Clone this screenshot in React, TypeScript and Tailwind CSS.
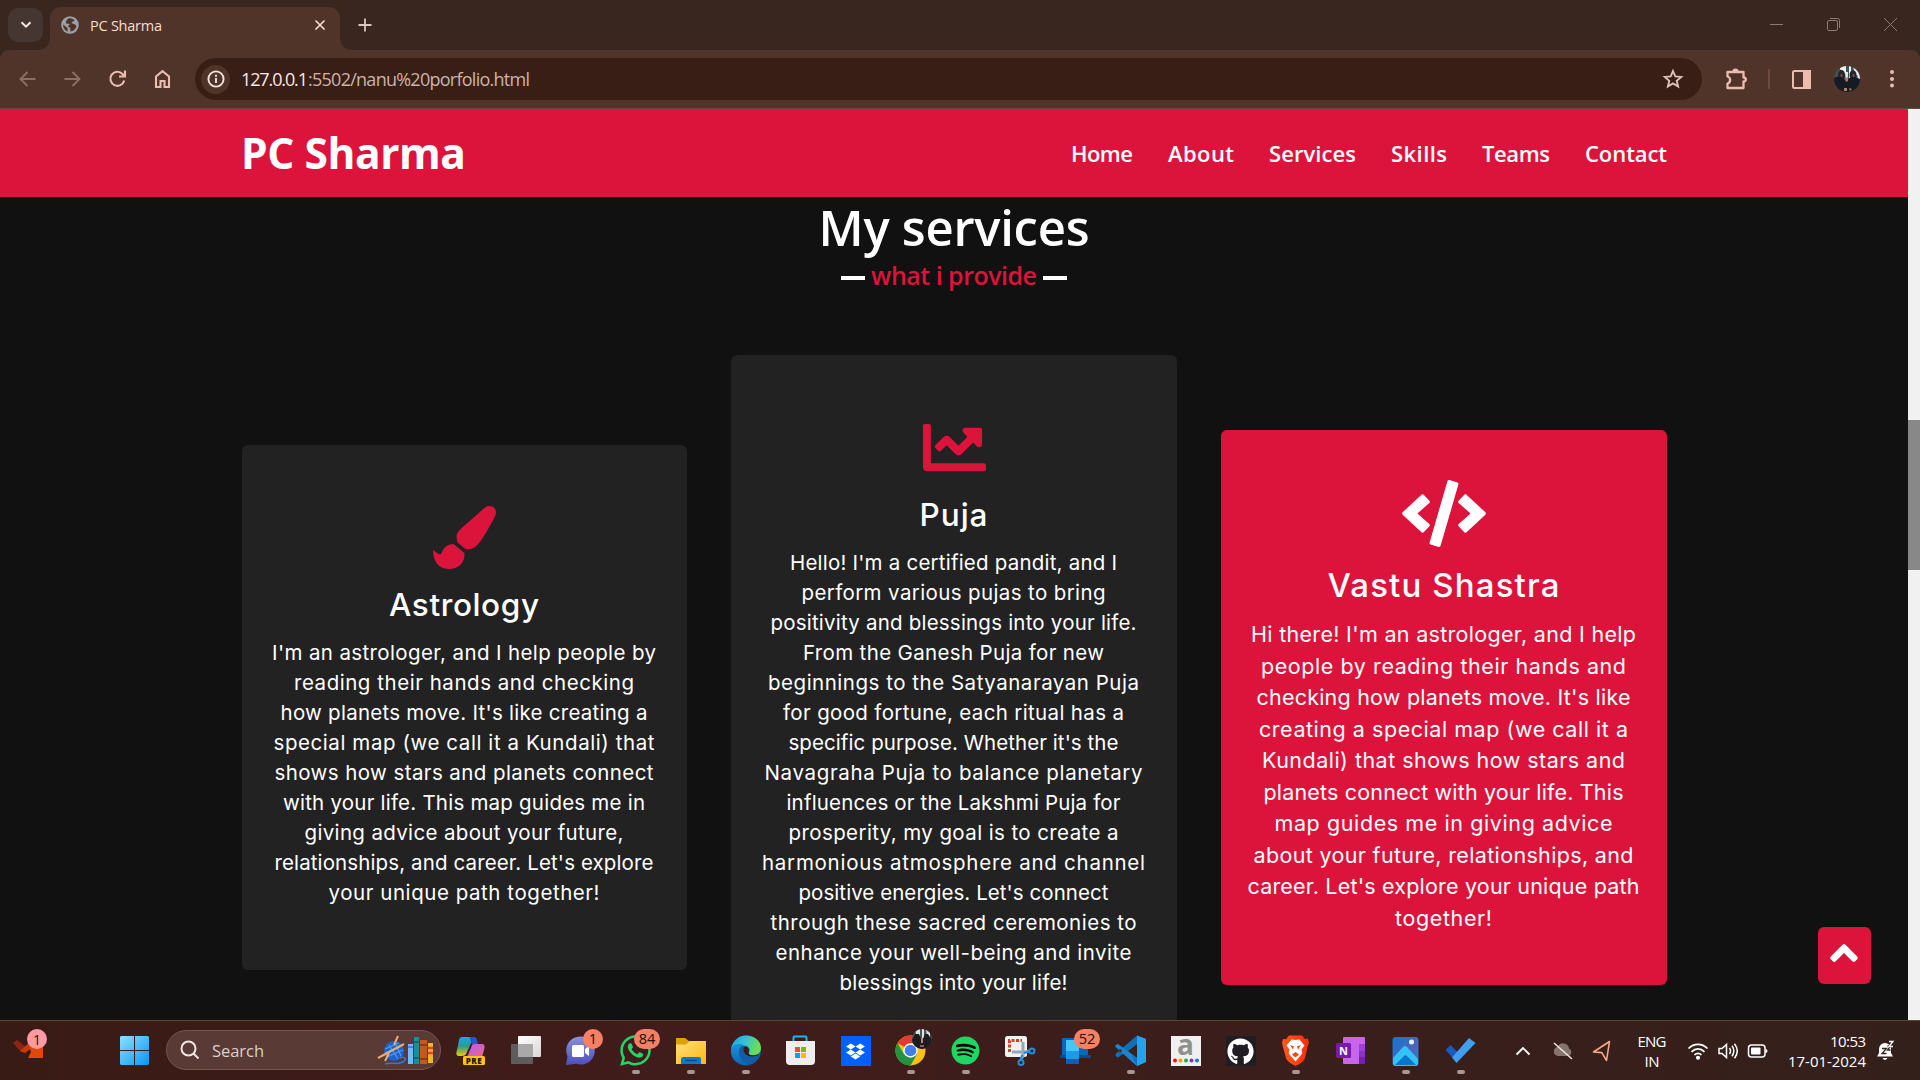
import { useLayoutEffect, useRef, type ReactNode } from "react";
import { FaPaintBrush, FaChartLine, FaCode, FaAngleUp, FaWhatsapp, FaSpotify, FaDropbox, FaGithub } from "react-icons/fa";

/** Single line of text tracked so that it spans exactly `w` pixels. */
function Fit({ w, className = "", children }: { w: number; className?: string; children: string }) {
  const ref = useRef<HTMLSpanElement>(null);
  useLayoutEffect(() => {
    const el = ref.current;
    if (!el) return;
    el.style.letterSpacing = "0px";
    const gap = (w - el.getBoundingClientRect().width) / Math.max(1, children.length - 1);
    el.style.letterSpacing = `${gap}px`;
    el.style.marginRight = `${-gap}px`;
  }, [w, children]);
  return (
    <span ref={ref} className={`inline-block whitespace-nowrap ${className}`}>
      {children}
    </span>
  );
}

type Line = [string, number];

const astrology: Line[] = [
  ["I'm an astrologer, and I help people by", 384],
  ["reading their hands and checking", 340],
  ["how planets move. It's like creating a", 367],
  ["special map (we call it a Kundali) that", 381],
  ["shows how stars and planets connect", 379],
  ["with your life. This map guides me in", 362],
  ["giving advice about your future,", 319],
  ["relationships, and career. Let's explore", 379],
  ["your unique path together!", 271],
];

const puja: Line[] = [
  ["Hello! I'm a certified pandit, and I", 327],
  ["perform various pujas to bring", 304],
  ["positivity and blessings into your life.", 366],
  ["From the Ganesh Puja for new", 301],
  ["beginnings to the Satyanarayan Puja", 371],
  ["for good fortune, each ritual has a", 341],
  ["specific purpose. Whether it's the", 330],
  ["Navagraha Puja to balance planetary", 378],
  ["influences or the Lakshmi Puja for", 334],
  ["prosperity, my goal is to create a", 330],
  ["harmonious atmosphere and channel", 383],
  ["positive energies. Let's connect", 310],
  ["through these sacred ceremonies to", 366],
  ["enhance your well-being and invite", 356],
  ["blessings into your life!", 228],
];

const vastu: Line[] = [
  ["Hi there! I'm an astrologer, and I help", 385],
  ["people by reading their hands and", 365],
  ["checking how planets move. It's like", 374],
  ["creating a special map (we call it a", 369],
  ["Kundali) that shows how stars and", 363],
  ["planets connect with your life. This", 360],
  ["map guides me in giving advice", 338],
  ["about your future, relationships, and", 380],
  ["career. Let's explore your unique path", 392],
  ["together!", 97],
];

const nav: Line[] = [
  ["Home", 62],
  ["About", 66],
  ["Services", 87],
  ["Skills", 56],
  ["Teams", 68],
  ["Contact", 82],
];

function TabStrip() {
  return (
    <div className="flex h-[50px] shrink-0 bg-[#38261f]">
      <div className="ml-2 mt-2 flex h-[34px] w-[35px] items-center justify-center rounded-[10px] bg-[#453631]">
        <svg width="12" height="8" viewBox="0 0 12 8" fill="none" stroke="#f5e5df" strokeWidth="2">
          <path d="M1.500 1.200 6 5.700l4.500-4.500" />
        </svg>
      </div>
      <div className="relative ml-[7px] mt-[7px] flex h-[43px] w-[290px] items-start rounded-t-[11px] bg-[#50342a]">
        <svg className="absolute -left-3 bottom-0" width="12" height="12" viewBox="0 0 12 12" fill="#50342a">
          <path d="M12 0v12H0A12 12 0 0 0 12 0Z" />
        </svg>
        <svg className="absolute -right-3 bottom-0" width="12" height="12" viewBox="0 0 12 12" fill="#50342a">
          <path d="M0 0v12h12A12 12 0 0 1 0 0Z" />
        </svg>
        <svg className="ml-[11px] mt-[9px]" width="18" height="18" viewBox="0 0 18 18">
          <circle cx="9" cy="9" r="8.800" fill="#9aa0a6" />
          <path d="M8 2.200c2-.3 4 .5 5.500 2-.2 1.600-2.800 1-3 2.500 1 1.500 4 .8 4.800 3.300-.2 3-3 5.200-6 5.400V13c0-1.500-1-2-2.200-2.300 0-1.400.6-1.700 1.800-1.700-.8-1.800-2.500-1-4.200-1.800C5 5 6 3 8 2.200Z" fill="#50342a" />
          <path d="M2.200 8.500 6.500 12l.3 3.500C4 14.800 2 12 2.200 8.500Z" fill="#50342a" />
        </svg>
        <Fit w={72} className="ml-[11px] mt-[9px] text-[14.500px] leading-[20px] text-[#f3ddd5]">PC Sharma</Fit>
        <svg className="absolute left-[264px] top-[12px]" width="12" height="12" viewBox="0 0 12 12" stroke="#f3ddd5" strokeWidth="1.700">
          <path d="m1.500 1.500 9 9m0-9-9 9" />
        </svg>
      </div>
      <svg className="ml-[18px] mt-[18px]" width="14" height="14" viewBox="0 0 14 14" stroke="#dcc7bf" strokeWidth="1.800">
        <path d="M7 .5v13M.5 7h13" />
      </svg>
      <div className="ml-auto mr-[22px] mt-[17px] flex gap-[42px]">
        <svg width="15" height="15" viewBox="0 0 15 15" stroke="#8a7a74"><path d="M1 7.500h13" /></svg>
        <svg width="15" height="15" viewBox="0 0 15 15" fill="none" stroke="#8a7a74">
          <rect x="1.500" y="3.500" width="10" height="10" rx="1.500" />
          <path d="M4 1.500h7.500a2 2 0 0 1 2 2V11" />
        </svg>
        <svg width="15" height="15" viewBox="0 0 15 15" stroke="#8a7a74"><path d="m1 1 13 13M14 1 1 14" /></svg>
      </div>
    </div>
  );
}

function Toolbar() {
  return (
    <div className="shrink-0 bg-[#38261f]">
      <div className="flex h-[59px] items-start rounded-t-[9px] border-b border-[#5e4c45] bg-[#50342a]">
        <div className="flex pl-[18px] pt-[19px]">
          <svg className="mr-[26px]" width="19" height="20" viewBox="0 0 19 20" fill="none" stroke="#8d6e64" strokeWidth="1.900">
            <path d="M17.500 10H3m6.500-7L2.500 10l7 7" />
          </svg>
          <svg className="mr-[26px]" width="19" height="20" viewBox="0 0 19 20" fill="none" stroke="#8d6e64" strokeWidth="1.900">
            <path d="M1.500 10H16M9.500 3l7 7-7 7" />
          </svg>
          <svg className="mr-[26px]" width="19" height="20" viewBox="0 0 19 20" fill="none" stroke="#eabdb0" strokeWidth="2.100">
            <path d="M16.200 11.500A7 7 0 1 1 14.500 5l2 2.200" />
            <path d="M17 1.500v6h-6" />
          </svg>
          <svg width="19" height="20" viewBox="0 0 19 20" fill="none" stroke="#eabdb0" strokeWidth="2.100">
            <path d="M3 18V7.500L9.500 2.200 16 7.500V18h-4.500v-6h-4v6Z" />
          </svg>
        </div>
        <div className="ml-[23px] mt-2 flex h-[42px] w-[1507px] items-center rounded-full bg-[#391e15]">
          <div className="ml-[6px] flex h-[29px] w-[29px] items-center justify-center rounded-full bg-[#50342a]">
            <svg width="18" height="18" viewBox="0 0 18 18" fill="none" stroke="#f6e3dc" strokeWidth="1.900">
              <circle cx="9" cy="9" r="7.600" />
              <path d="M9 8v5M9 4.800v2" />
            </svg>
          </div>
          <div className="ml-[11px] flex text-[18px] leading-[24px] text-[#cdb3a9]">
            <Fit w={67} className="text-[#f8e8e2]">127.0.0.1</Fit>
            <Fit w={222}>:5502/nanu%20porfolio.html</Fit>
          </div>
          <svg className="ml-auto mr-[18px]" width="22" height="22" viewBox="0 0 22 22" fill="none" stroke="#dcc3ba" strokeWidth="1.900">
            <path d="m11 3 2.300 5.400 5.900.5-4.500 3.900 1.400 5.700L11 15.400l-5.100 3.100 1.400-5.700-4.500-3.900 5.900-.5Z" />
          </svg>
        </div>
        <svg className="ml-[23px] mt-[17px]" width="24" height="24" viewBox="0 0 24 24" fill="none" stroke="#eabdb0" strokeWidth="2.300" strokeLinejoin="round">
          <path d="M2.500 5h16v5.500c3 0 3 4 0 4V21h-16v-4.500c3.500-1 3.500-6 0-7Z" />
          <path d="M8.500 4.500c0-2.500 4-2.500 4 0" fill="#eabdb0" />
        </svg>
        <div className="ml-[19px] mt-[19px] h-5 w-[2px] bg-[#704a3e]" />
        <svg className="ml-[22px] mt-[20px]" width="19" height="19" viewBox="0 0 19 19" fill="none" stroke="#eabdb0" strokeWidth="2">
          <rect x="1" y="1" width="17" height="17" rx="1.500" />
          <path d="M12 1h6v17h-6Z" fill="#eabdb0" />
        </svg>
        <svg className="ml-[23px] mt-[16px] rounded-full" width="26" height="26" viewBox="0 0 26 26">
          <rect width="26" height="26" fill="#3a5658" />
          <path d="M6 0h6v8H9L6 3Zm9 0h2v12h-2Zm4 0h3l2 9h-3Zm3 3h4v10h-2Z" fill="#e6f1ef" />
          <path d="M11 6h3v9h-2Z" fill="#dfe9e6" />
          <ellipse cx="7.500" cy="9" rx="3.500" ry="5" fill="#2b2024" />
          <ellipse cx="19" cy="9" rx="3.500" ry="4.500" fill="#2a2429" />
          <path d="M0 26V12c3-2 9-2 12 4 2-5 7-6 14-3v13Z" fill="#151b24" />
          <path d="M6.500 8h2v3h-2ZM18.500 8h2v3h-2Z" fill="#6f4e44" />
          <path d="m12 12 2-1v4l-2 1Z" fill="#e0605a" />
          <path d="M10 22h3v3h-3Zm5 0 3 1-2 2Z" fill="#b57d58" />
        </svg>
        <svg className="ml-[29px] mt-[19px]" width="6" height="20" viewBox="0 0 6 20" fill="#eabdb0">
          <circle cx="3" cy="3" r="2" /><circle cx="3" cy="10" r="2" /><circle cx="3" cy="16.500" r="2" />
        </svg>
      </div>
    </div>
  );
}

function Card({ title, titleWidth, icon, lines, boxClass, titleClass, lineClass }: {
  title: string; titleWidth: number; icon: ReactNode; lines: Line[];
  boxClass: string; titleClass: string; lineClass: string;
}) {
  return (
    <article className={`flex flex-col items-center rounded-md text-white ${boxClass}`}>
      {icon}
      <h3 className={`font-medium ${titleClass}`}><Fit w={titleWidth}>{title}</Fit></h3>
      {lines.map(([text, w]) => (
        <p key={text} className={lineClass}><Fit w={w}>{text}</Fit></p>
      ))}
    </article>
  );
}

function Page() {
  return (
    <div className="flex h-[911px] shrink-0 overflow-hidden bg-[#111111]">
      <div className="relative w-[1908px]">
        <header className="flex h-[88px] items-center bg-[#dc143c] pl-[241px] pr-[241px] font-['Open_Sans'] text-white">
          <Fit w={225} className="text-[42.500px] font-bold leading-[88px]">PC Sharma</Fit>
          <nav className="ml-auto flex gap-[35px] text-[22px] font-semibold leading-[86px]">
            {nav.map(([t, w]) => <Fit key={t} w={w}>{t}</Fit>)}
          </nav>
        </header>
        <section className="flex flex-col items-center font-['Open_Sans'] text-white">
          <h2 className="h-[60px] text-[49px] font-semibold leading-[60px]"><Fit w={271}>My services</Fit></h2>
          <div className="flex h-[36px] items-center gap-[6px]">
            <span className="mt-[6px] h-1 w-6 bg-white" />
            <Fit w={166} className="text-[25px] font-semibold leading-[34px] text-[#dc143c]">what i provide</Fit>
            <span className="mt-[6px] h-1 w-6 bg-white" />
          </div>
          <div className="mt-[62px] flex h-[705px] items-center gap-[44px] font-['Inter']">
            <Card
              title="Astrology" titleWidth={150} lines={astrology}
              icon={<FaPaintBrush className="mt-[61px] size-[63px] shrink-0 text-[#dc143c]" />}
              boxClass="h-[525px] w-[445px] bg-[#222222]"
              titleClass="mb-[10px] mt-[13px] text-[31.500px] leading-[46px]"
              lineClass="text-[20.500px] leading-[30px]"
            />
            <Card
              title="Puja" titleWidth={68} lines={puja}
              icon={<FaChartLine className="ml-px mt-[61px] size-[63px] shrink-0 text-[#dc143c]" />}
              boxClass="h-[705px] w-[446px] bg-[#222222]"
              titleClass="mb-[10px] mt-[13px] text-[31.500px] leading-[46px]"
              lineClass="text-[20.500px] leading-[30px]"
            />
            <Card
              title="Vastu Shastra" titleWidth={232} lines={vastu}
              icon={<FaCode className="ml-px mt-[50px] h-[67px] w-[84px] shrink-0" />}
              boxClass="h-[555px] w-[446px] bg-[#dc143c]"
              titleClass="mb-[10px] mt-[14px] text-[33px] leading-[48px]"
              lineClass="text-[21.500px] leading-[31.500px]"
            />
          </div>
        </section>
        <div className="absolute left-[1818px] top-[818px] flex h-[57px] w-[53px] items-center justify-center rounded-md bg-[#dc143c]">
          <FaAngleUp className="mb-[5px] mr-px h-[44px] w-[28px] text-white" />
        </div>
      </div>
      <div className="w-3 bg-[#f1f1f1] pt-[311px]">
        <div className="h-[150px] bg-[#888888]" />
      </div>
    </div>
  );
}

function Slot({ children, open, badge }: { children: ReactNode; open?: boolean; badge?: string }) {
  return (
    <div className="relative flex w-[55px] shrink-0 justify-center pt-[14px]">
      {children}
      {badge && (
        <span className={`absolute top-[8px] flex h-5 items-center justify-center rounded-full bg-[#f58065] text-[14.500px] text-[#22100c] ${badge.length > 1 ? "left-[26px] w-[26px]" : "left-[30px] w-5"}`}>
          {badge}
        </span>
      )}
      {open && <span className="absolute left-[24px] top-[49px] h-1 w-2 rounded-full bg-[#a89894]" />}
    </div>
  );
}

function Icon({ children }: { children: ReactNode }) {
  return <svg className="size-[31px] shrink-0 overflow-visible" viewBox="0 0 31 31">{children}</svg>;
}

function TaskbarApps() {
  return (
    <>
      <Slot>
        <Icon>
          <defs>
            <linearGradient id="cp1" x1="0" y1="0" x2="0" y2="1"><stop stopColor="#1ca2f0" /><stop offset=".5" stopColor="#2f9c8c" /><stop offset="1" stopColor="#f4c80a" /></linearGradient>
            <linearGradient id="cp2" x1="0" y1="0" x2="1" y2="1"><stop stopColor="#b45cf0" /><stop offset="1" stopColor="#f0668c" /></linearGradient>
          </defs>
          <path d="M7 2h11c3 0 3 3 4 6h-6l-4 9c-1 3-3 4-5 4H4c-3 0-3-3-2-6L4 5c.5-2 1.500-3 3-3Z" fill="url(#cp1)" />
          <path d="M14 2h5c3 0 3 3 4 7h-6c-2-2-1-6-3-7Z" fill="#2457c8" />
          <path d="M19 9h8c3 0 3 3 2 6l-2 7H12l4-9c.5-2 1-4 3-4Z" fill="url(#cp2)" />
          <rect x="8" y="21" width="22" height="9" rx="1.500" fill="#fcc60e" />
          <text x="19" y="28.500" textAnchor="middle" fontSize="8" fontWeight="800" letterSpacing=".6" fill="#201400">PRE</text>
        </Icon>
      </Slot>
      <Slot>
        <Icon>
          <defs><linearGradient id="tv" x1="0" y1="0" x2="1" y2="1"><stop stopColor="#ffffff" /><stop offset="1" stopColor="#d8d8d8" /></linearGradient></defs>
          <rect x="8" y="1" width="23" height="21" rx="1" fill="url(#tv)" />
          <rect x="1" y="9" width="22" height="20" rx="1" fill="#5d5d5d" />
          <rect x="8" y="9" width="15" height="13" fill="#a9a9a9" />
        </Icon>
      </Slot>
      <Slot badge="1">
        <Icon>
          <defs><linearGradient id="mt" x1="0" y1="0" x2="0" y2="1"><stop stopColor="#8d8fd9" /><stop offset="1" stopColor="#4b50bd" /></linearGradient></defs>
          <path d="M15.500 1.500a14 14 0 1 1-4 27.300L1 30l1.500-8.500A14 14 0 0 1 15.500 1.500Z" fill="url(#mt)" />
          <rect x="7" y="10" width="12" height="12" rx="1.500" fill="#fff" />
          <path d="m20 14 4-3v10l-4-3Z" fill="#fff" />
        </Icon>
      </Slot>
      <Slot open badge="84"><FaWhatsapp className="-mt-[2px] size-[35px] text-[#25d366]" /></Slot>
      <Slot open>
        <Icon>
          <defs><linearGradient id="fd" x1="0" y1="0" x2="1" y2="1"><stop stopColor="#ffdf79" /><stop offset="1" stopColor="#f9b916" /></linearGradient></defs>
          <path d="M1 3h9l4 3v6H1Z" fill="#df9f06" />
          <path d="M1 9.500h10L14.500 6H31v23H1Z" fill="url(#fd)" />
          <path d="M8 22h16q2 0 2 2v5H6v-5q0-2 2-2Z" fill="#0f78cd" />
          <path d="M10 25.500h12" stroke="#064c8a" strokeWidth="1.500" />
        </Icon>
      </Slot>
      <Slot open>
        <Icon>
          <defs>
            <linearGradient id="e1" x1="0" y1="0" x2="1" y2=".3"><stop stopColor="#1a9de0" /><stop offset=".5" stopColor="#35c1d8" /><stop offset="1" stopColor="#6be04c" /></linearGradient>
            <linearGradient id="e2" x1="0" y1="0" x2="0" y2="1"><stop stopColor="#1893df" /><stop offset="1" stopColor="#0a66b8" /></linearGradient>
          </defs>
          <circle cx="16" cy="15.500" r="15" fill="#0f5ea6" />
          <path d="M1 14C3 5 9 .5 16 .5c8 0 15 5 15 12.500 0 5-4 7.500-8 7.500-3 0-5-1.500-4-3 2-4-1-7-5-7C8 10.500 3 12 1 14Z" fill="url(#e1)" />
          <path d="M1 15c1-5 7-7 12-5.500-4 3-5 8-3 13 2 4 6 7 9 7.500C9 32 0 24 1 15Z" fill="url(#e2)" />
          <path d="M14 12c3-1 6 2 4.500 5.500C18 20 22 21.500 29 19c-1 1.600-3.500 2.500-7 2.500-6 0-10-4.500-8-9.500Z" fill="#3a1b18" />
        </Icon>
      </Slot>
      <Slot>
        <Icon>
          <path d="M8.500 7V2.500q0-1 1-1h11q1 0 1 1V7" fill="none" stroke="#25b4e8" strokeWidth="2" />
          <path d="M1 6h29v20q0 4-4 4H5q-4 0-4-4Z" fill="#eeeeee" />
          <path d="M10 12h5v5h-5Z" fill="#f25022" /><path d="M16 12h5v5h-5Z" fill="#7fba00" />
          <path d="M10 18h5v5h-5Z" fill="#00a4ef" /><path d="M16 18h5v5h-5Z" fill="#ffb900" />
        </Icon>
      </Slot>
      <Slot>
        <div className="mt-[1px] flex h-[30px] w-[30px] items-center justify-center bg-[#0061fe]">
          <FaDropbox className="size-[19px] text-white" />
        </div>
      </Slot>
      <Slot open>
        <Icon>
          <circle cx="15.500" cy="15.500" r="15" fill="#fbc116" />
          <path d="M15.500 15.500 2.500 8A15 15 0 0 1 28.500 8H15.500Z" fill="#e33b2e" />
          <path d="M2.500 8A15 15 0 0 0 15.500 30.500L22 19.300 9 19.200Z" fill="#229342" />
          <circle cx="15.500" cy="15.500" r="7.200" fill="#fff" /><circle cx="15.500" cy="15.500" r="5.800" fill="#3f7ff0" />
          <clipPath id="pf"><circle cx="27" cy="4" r="10" /></clipPath>
          <g clipPath="url(#pf)">
            <path d="M17-6h20v20H17Z" fill="#4a5557" />
            <path d="M20-6h5v7l-3 3Zm7 0h2V6h-2Zm4 0h4v9l-3-2Z" fill="#dde5e4" />
            <path d="M17 14V5l3-6h4l3 7 3-7h3l4 6v9Z" fill="#1d1b1f" />
            <path d="M26 3h2v5h-2Z" fill="#c07f74" />
            <path d="M25 10h4v2h-4Z" fill="#8c624c" />
          </g>
        </Icon>
      </Slot>
      <Slot open>
        <div className="mt-[2px] size-[27px] rounded-full bg-black"><FaSpotify className="-ml-[1px] -mt-[1px] size-[29px] text-[#1ed760]" /></div>
      </Slot>
      <Slot>
        <Icon>
          <rect x="0" y="1" width="22" height="21" rx="2.500" fill="#eef1f5" />
          <path d="M4.500 17V5.500H17" fill="none" stroke="#d8411f" strokeWidth="3" strokeDasharray="3 1.500" />
          <path d="M18 7v14l-2 3M7 17h13l4-1" fill="none" stroke="#9aa7b3" strokeWidth="3" />
          <path d="m19 18 6-1.500M17 20l-1 5" stroke="#1e8fe0" strokeWidth="2" />
          <circle cx="27" cy="16" r="2.500" fill="none" stroke="#1e8fe0" strokeWidth="2" />
          <circle cx="16" cy="27.500" r="2.500" fill="none" stroke="#1e8fe0" strokeWidth="2" />
        </Icon>
      </Slot>
      <Slot badge="52">
        <Icon>
          <path d="M2 3h26v17H2Z" fill="#0e66b8" /><path d="M0 20h31v3H0Z" fill="#0a4c8f" />
          <rect x="6" y="5" width="13" height="24" fill="#1e9be6" /><rect x="6" y="5" width="13" height="11" fill="#45c6f5" />
          <rect x="6" y="24" width="13" height="5" fill="#155bb0" />
        </Icon>
      </Slot>
      <Slot open>
        <Icon>
          <path d="M22 .5 31 4v23l-9 4L8.500 18.500 3 22.500.5 21V19L22 .5Z" fill="#0f6fb9" />
          <path d="M22 31 .5 12V10L3 9l5.500 4L23 25V8L14 15Z" fill="#1a86d0" />
          <path d="m4.500 13.500 2.700 2.300-2.700 2.300Z" fill="#38201b" />
          <path d="M22 9v14l-9-7Z" fill="#38201b" /><path d="m22 .5 9 3.500v23l-9 4Z" fill="#27a1ec" />
        </Icon>
      </Slot>
      <Slot>
        <Icon>
          <rect x="1" y="1" width="30" height="30" fill="#f0f0f0" />
          <text x="15.500" y="20" textAnchor="middle" fontSize="28" fontWeight="700" fill="#909090">a</text>
          <circle cx="5" cy="25.500" r="2" fill="#e81123" /><circle cx="10.500" cy="25.500" r="2" fill="#f39c12" />
          <circle cx="16" cy="25.500" r="2" fill="#1fae4b" /><circle cx="21.500" cy="25.500" r="2" fill="#8c30c9" />
          <circle cx="27" cy="25.500" r="2" fill="#0a7cd8" />
        </Icon>
      </Slot>
      <Slot>
        <div className="mt-[1px] flex size-[30px] items-center justify-center bg-[#1f1d22]"><FaGithub className="size-[27px] text-white" /></div>
      </Slot>
      <Slot open>
        <Icon>
          <defs><linearGradient id="br" x1="0" x2="1"><stop stopColor="#ff5a1c" /><stop offset="1" stopColor="#ff2a0a" /></linearGradient></defs>
          <path d="M9 .5h13l3 3.500 3-.3 1 4-1.500 4L25 23q-1 4-9.500 8Q7 27 6 23L3 12 2 8l1-4 3 .2Z" fill="url(#br)" />
          <path d="m15.500 5 4-.5 5 6-3 4 .8 4-6.800 8-6.800-8 .8-4-3-4 5-6Z" fill="#fff" />
          <path d="m10 10 4 1.500-1 3ZM21 10l-4 1.500 1 3ZM12 19.500l3.500-2.500 3.500 2.500-3.500 3Z" fill="#fa4416" />
        </Icon>
      </Slot>
      <Slot>
        <Icon>
          <rect x="8" y="2" width="22" height="27" rx="1" fill="#c965ea" />
          <path d="M24 9h6v7h-6Z" fill="#a33fd4" /><path d="M24 16h6v6h-6Z" fill="#8b33c0" /><path d="M24 22h6v7h-6Z" fill="#7420aa" />
          <rect x="1" y="8" width="15" height="15" rx="1.500" fill="#7719aa" />
          <text x="8.500" y="19.500" textAnchor="middle" fontSize="11" fontWeight="700" fill="#fff">N</text>
        </Icon>
      </Slot>
      <Slot open>
        <Icon>
          <defs><linearGradient id="ph" x1="0" y1="0" x2="1" y2="1"><stop stopColor="#0f77d3" /><stop offset=".6" stopColor="#5363bd" /><stop offset="1" stopColor="#1389de" /></linearGradient></defs>
          <rect x="2.500" y="2" width="26" height="29" rx="3" fill="url(#ph)" />
          <path d="m3 23 10-11q2-2 4 0l11 12v4q0 3-3 3H6q-3 0-3-3Z" fill="#33c2f5" /><path d="m5 30 9-9q1.500-1.500 3 0l9 9Z" fill="#0a76c9" />
          <circle cx="21.500" cy="7" r="2.500" fill="#e5f6ff" />
        </Icon>
      </Slot>
      <Slot open>
        <Icon>
          <path d="m.5 15 5-5 10 10-4 7Z" fill="#195abd" /><path d="M11.500 28 7 22.500 24 3l6.500 5Z" fill="#3fa0f0" />
        </Icon>
      </Slot>
    </>
  );
}

function Tray() {
  return (
    <div className="flex h-full items-center pl-[25px] text-white">
      <svg width="18" height="12" viewBox="0 0 18 12" fill="none" stroke="#fff" strokeWidth="1.900"><path d="m2.500 9.500 6.500-6.500 6.500 6.500" /></svg>
      <svg className="ml-[20px]" width="22" height="20" viewBox="0 0 22 20">
        <path d="M6 15a4.500 4.500 0 0 1-.5-8.900A6 6 0 0 1 17 7.500a4 4 0 0 1-.5 7.500H6Z" fill="#86736e" />
        <path d="m2 2 18 16" stroke="#f0e8e5" strokeWidth="1.500" />
      </svg>
      <svg className="ml-[18px]" width="20" height="22" viewBox="0 0 20 22" fill="none" stroke="#f5a98c" strokeWidth="1.600" strokeLinejoin="round"><path d="M17.500 1.500 14.500 20.500 9.800 12.600 1.500 12Z" /></svg>
      <div className="ml-[20px] flex w-[40px] flex-col items-center text-[15px] leading-[20px]">
        <Fit w={29}>ENG</Fit><Fit w={15}>IN</Fit>
      </div>
      <svg className="ml-[15px]" width="22" height="18" viewBox="0 0 22 18" fill="none" stroke="#fff" strokeWidth="1.700">
        <path d="M1.500 6.500c5.500-5.500 13.500-5.500 19 0M4.500 9.800c4-4 9-4 13 0M7.500 13c2-2.200 5-2.200 7 0" /><circle cx="11" cy="15.800" r="1.200" fill="#fff" />
      </svg>
      <svg className="ml-[8px]" width="22" height="18" viewBox="0 0 22 18" fill="none" stroke="#fff" strokeWidth="1.500">
        <path d="M2 6.500h3L9.500 2.500v13L5 11.500H2ZM12.500 6q2 3 0 6M15 3.800q3.600 5.200 0 10.400M17.500 1.800q5.500 7.200 0 14.400" />
      </svg>
      <svg className="ml-[8px]" width="22" height="16" viewBox="0 0 22 16">
        <rect x="1.500" y="2" width="16.500" height="12" rx="3" fill="none" stroke="#fff" strokeWidth="1.500" />
        <rect x="4" y="4.500" width="9.500" height="7" rx="1" fill="#fff" /><path d="M18.500 6q2 0 2 2t-2 2Z" fill="#fff" />
      </svg>
      <div className="ml-auto flex flex-col items-end text-[15px] leading-[20px]">
        <Fit w={36}>10:53</Fit><Fit w={78}>17-01-2024</Fit>
      </div>
      <svg className="ml-[10px] mr-[25px]" width="19" height="22" viewBox="0 0 19 22">
        <path d="M1 16.500 3 13V9a6 6 0 0 1 12 0v4l2 3.500ZM6.500 18h5q-2.500 4-5 0Z" fill="#fff" />
        <path d="M6 8.500h4.500L6 13.500h4.500M11.500 6h3l-3 4h3" stroke="#38201b" strokeWidth="1.300" fill="none" />
        <path d="M13 1.500h4l-4 5h4" stroke="#fff" strokeWidth="1.300" fill="none" />
      </svg>
    </div>
  );
}

function Taskbar() {
  return (
    <footer className="flex h-[60px] shrink-0 border-t border-[#5d4236] bg-linear-to-r from-[#391b15] via-[#401c1b] via-35% to-[#34201b]">
      <div className="relative w-[107px] shrink-0 pl-[13px] pt-[18px]">
        <svg width="32" height="20" viewBox="0 0 32 20">
          <path d="m0 4 4-3 9 7-5 5Z" fill="#8e2418" /><path d="m7 12 13-12 4 5-12 9Z" fill="#c83c0c" /><path d="M15 4h15v15H15l3-6Z" fill="#e0480a" />
        </svg>
        <span className="absolute left-[27px] top-[8px] flex size-5 items-center justify-center rounded-full bg-[#ff99a4] text-[14px] text-[#33100c]">1</span>
      </div>
      <div className="flex w-[59px] shrink-0 pl-[13px] pt-[15px]">
        <svg width="29" height="29" viewBox="0 0 29 29">
          <defs><linearGradient id="win" gradientUnits="userSpaceOnUse" x1="0" y1="0" x2="29" y2="29"><stop stopColor="#8be0ff" /><stop offset="1" stopColor="#0a95f5" /></linearGradient></defs>
          <path d="M1 0h13v14H0V1ZM15 0h13l1 1v13H15ZM0 15h14v14H1l-1-1ZM15 15h14v13l-1 1H15Z" fill="url(#win)" />
        </svg>
      </div>
      <div className="mt-[9px] flex h-[40px] w-[275px] shrink-0 items-center rounded-full border border-[#75564f] bg-[#593a35] pl-[13px] pr-[5px]">
        <svg width="20" height="20" viewBox="0 0 20 20" fill="none" stroke="#efe6e4" strokeWidth="2"><circle cx="8.500" cy="8.500" r="7" /><path d="m13.500 13.500 5 5" /></svg>
        <Fit w={52} className="ml-[12px] mt-px text-[16.500px] leading-[24px] text-[#dccfcc]">Search</Fit>
        <svg className="ml-auto" width="58" height="32" viewBox="0 0 58 32">
          <circle cx="17" cy="17" r="10" fill="#1e62d0" />
          <path d="m8 15 14-6M8 19l17-7M10 23l16-7M12 11l9 14M18 8l6 14" stroke="#4b9bf5" strokeWidth="1.200" />
          <path d="m1 24 26-14M8 27l4-8M17 11l4-9" stroke="#e8ac72" strokeWidth="2" />
          <path d="M8 30c6-2 13 1 18-2 5-3 1-6-3-4" fill="none" stroke="#2e78e0" strokeWidth="1.500" />
          <path d="M31 10h5v20h-5Z" fill="#79b8f5" /><path d="M37 3h5v27h-5Z" fill="#15919b" /><path d="M43 6h7v24h-7Z" fill="#c45a17" /><path d="M51 9h5v20h-5Z" fill="#f0b429" />
          <path d="M31 13h5" stroke="#3f6fd0" strokeWidth="1.500" /><path d="M37 8h5M37 24h5" stroke="#0c5f6b" strokeWidth="1.500" /><path d="M51 14h5M51 19h5" stroke="#d84343" strokeWidth="2.500" /><path d="M43 11h7M43 25h7" stroke="#7e330d" strokeWidth="1.500" />
        </svg>
      </div>
      <div className="ml-[2px] flex"><TaskbarApps /></div>
      <div className="ml-auto w-[431px] shrink-0"><Tray /></div>
    </footer>
  );
}

export default function App() {
  return (
    <div className="flex h-[1080px] w-[1920px] flex-col overflow-hidden bg-[#111111] font-['Open_Sans',sans-serif]">
      <TabStrip />
      <Toolbar />
      <Page />
      <Taskbar />
    </div>
  );
}
